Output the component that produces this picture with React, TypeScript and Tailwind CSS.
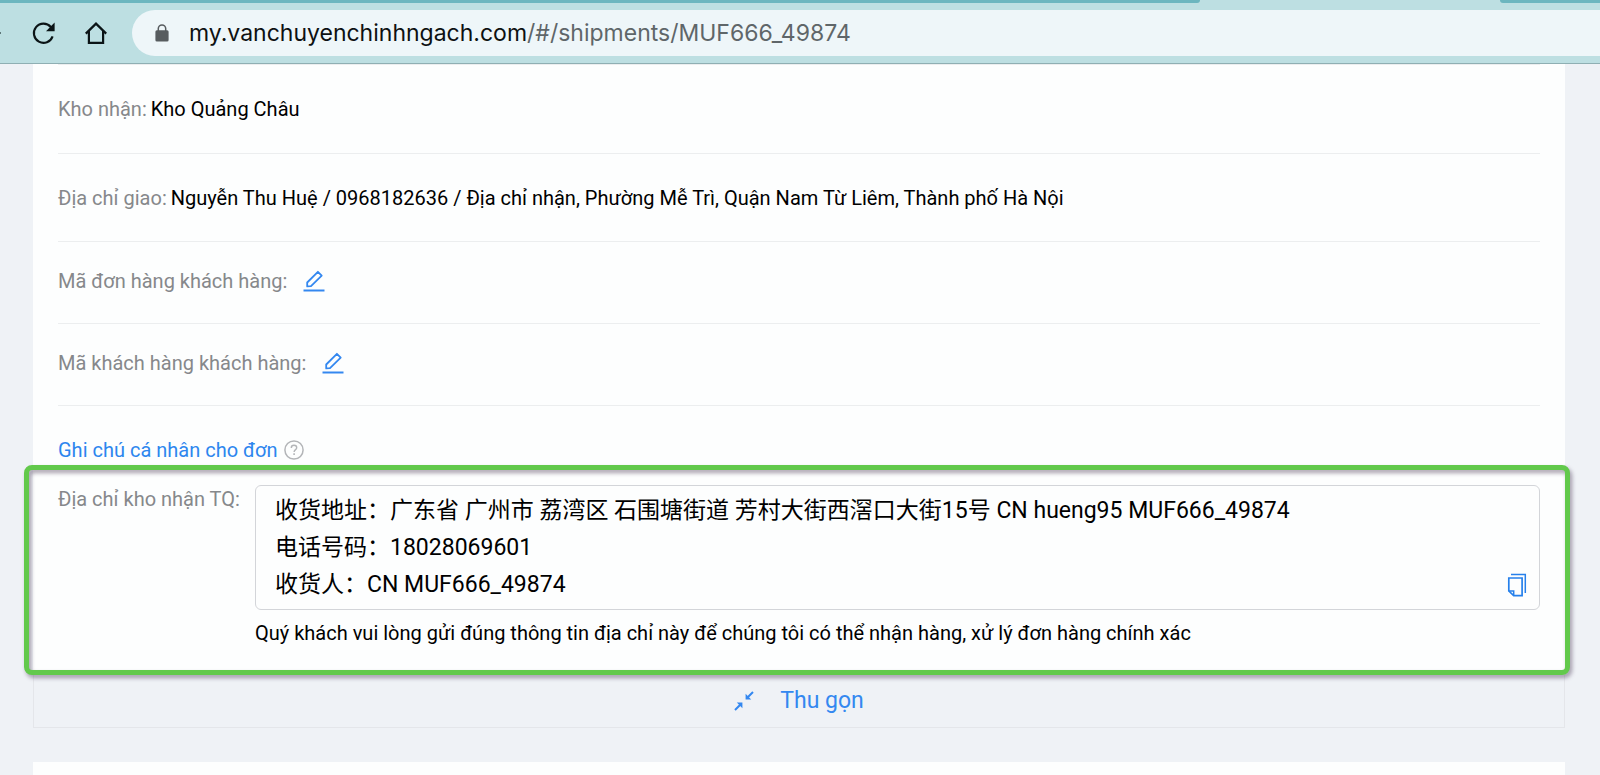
import type { ReactNode } from "react";

const addressLines = [
  "收货地址：广东省 广州市 荔湾区 石围塘街道 芳村大街西滘口大街15号 CN hueng95 MUF666_49874",
  "电话号码：18028069601",
  "收货人：CN MUF666_49874",
];

const ReloadIcon = () => (
  <svg width="24" height="24" viewBox="0 0 24 24" fill="none" aria-hidden="true">
    <path d="M20.6 15.3A9.6 9.6 0 1 1 18.8 6" stroke="#0b1416" strokeWidth="2.1" />
    <path d="M22.6 1.6v8.6H14z" fill="#0b1416" />
  </svg>
);

const HomeIcon = () => (
  <svg width="24" height="24" viewBox="0 0 24 24" fill="none" stroke="#0b1416" strokeWidth="2.2" aria-hidden="true">
    <path d="M1.8 12.6 12 2.6l10.2 10" />
    <path d="M4.9 10v11.8h14.2V10" />
  </svg>
);

const LockIcon = () => (
  <svg width="14" height="18" viewBox="0 0 14 18" fill="none" aria-hidden="true">
    <rect x="0.4" y="6.2" width="13.2" height="11.3" rx="1.5" fill="#575c5f" />
    <path d="M3.3 7V4.6a3.7 3.7 0 0 1 7.4 0V7" stroke="#575c5f" strokeWidth="1.5" />
  </svg>
);

const EditIcon = () => (
  <svg width="22" height="22" viewBox="0 0 22 22" fill="none" stroke="#3488f0" aria-hidden="true">
    <path d="M4.2 16.4v-3.9L14.9 1.8l3.8 3.8L8 16.2z" strokeWidth="1.8" strokeLinejoin="round" />
    <path d="M0.5 20.5h21" strokeWidth="2" />
  </svg>
);

const HelpIcon = () => (
  <svg width="20" height="20" viewBox="0 0 20 20" fill="none" stroke="#b3b5b8" aria-hidden="true">
    <circle cx="10" cy="10" r="9.1" strokeWidth="1.5" />
    <path d="M7.3 7.9c0-1.6 1.2-2.6 2.7-2.6s2.7 1 2.7 2.4c0 1.9-2.6 2-2.6 4.3" strokeWidth="1.4" />
    <path d="M10.1 13.3v1.7" strokeWidth="1.6" />
  </svg>
);

const CopyIcon = () => (
  <svg width="20" height="24" viewBox="0 0 20 24" fill="none" stroke="#2680eb" aria-hidden="true">
    <path d="M4 1.6h14.3V20" strokeWidth="1.5" />
    <path d="M1.8 5h13.3v17.6H6.7L1.8 18z" strokeWidth="1.7" />
    <path d="M1.8 17.9h4.9v4.7" strokeWidth="1.5" />
  </svg>
);

const CollapseIcon = () => (
  <svg width="20" height="20" viewBox="0 0 20 20" fill="none" aria-hidden="true">
    <path d="M19 1l-5 5M1 19l5-5" stroke="#3488f0" strokeWidth="2" />
    <path d="M11.6 2.8v5.6h5.6zM8.4 17.2v-5.6H2.8z" fill="#3488f0" />
  </svg>
);

const Label = ({ children }: { children: ReactNode }) => <span className="text-[#86888b]">{children}</span>;

const App = () => {
  return (
    <div className="h-screen overflow-hidden bg-[#eff2f6] text-[20px] leading-7 text-black font-[Roboto,'Noto_Sans_CJK_SC',sans-serif]">
      <header className="border-b border-[#8fafb3] bg-[#bddfe2]">
        <div className="flex h-[3px] justify-between">
          <div className="w-3/4 rounded-br-lg bg-[#6cb6bf]" />
          <div className="w-[100px] rounded-bl-lg bg-[#6cb6bf]" />
        </div>
        <div className="flex items-center pt-[7px] pb-[7px]">
          <div className="h-[2px] w-px bg-[#5e7779]" />
          <button type="button" aria-label="Reload" className="ml-[31px]">
            <ReloadIcon />
          </button>
          <button type="button" aria-label="Home" className="ml-7">
            <HomeIcon />
          </button>
          <a
            href="#/shipments/MUF666_49874"
            className="ml-6 flex h-[46px] flex-1 items-center gap-5 rounded-l-full bg-[#eef6f9] pl-[23px] text-[23px] text-[#0d1112] font-[Inter,sans-serif]"
          >
            <LockIcon />
            <span>
              my.vanchuyenchinhngach.com<span className="text-[#5f6669]">/#/shipments/MUF666_49874</span>
            </span>
          </a>
        </div>
      </header>

      <main className="mr-[35px] ml-[33px]">
        <section className="bg-[#fdfefe]">
          <div className="mx-[25px]">
            <div className="flex h-[90px] items-center gap-1 border-y border-[#eceeef]">
              <Label>Kho nhận:</Label>
              <span>Kho Quảng Châu</span>
            </div>
            <div className="flex h-[88px] items-center gap-1 border-b border-[#eceeef]">
              <Label>Địa chỉ giao:</Label>
              <span>Nguyễn Thu Huệ / 0968182636 / Địa chỉ nhận, Phường Mễ Trì, Quận Nam Từ Liêm, Thành phố Hà Nội</span>
            </div>
            <div className="flex h-[82px] items-center gap-4 border-b border-[#eceeef] pb-[3px]">
              <Label>Mã đơn hàng khách hàng:</Label>
              <button type="button" aria-label="Sửa mã đơn hàng">
                <EditIcon />
              </button>
            </div>
            <div className="flex h-[82px] items-center gap-4 border-b border-[#eceeef] pb-[3px]">
              <Label>Mã khách hàng khách hàng:</Label>
              <button type="button" aria-label="Sửa mã khách hàng">
                <EditIcon />
              </button>
            </div>
            <div className="flex items-center gap-[7px] pt-[30px]">
              <a href="#note" className="text-[#2d86ee]">
                Ghi chú cá nhân cho đơn
              </a>
              <HelpIcon />
            </div>
          </div>

          <div className="relative mt-1 flex px-[25px] pt-[17px] pb-7">
            {/* highlight frame */}
            <div className="pointer-events-none absolute -top-[3px] -right-[5px] bottom-0 -left-[9px] rounded-lg border-5 border-[#62c94b] drop-shadow-[2px_3px_2px_rgba(60,40,70,0.45)]" />
            <div className="w-[197px] shrink-0">
              <Label>Địa chỉ kho nhận TQ:</Label>
            </div>
            <div className="flex-1">
              <div className="flex items-end justify-between rounded-md border border-[#d3d5d9] py-[6px] pr-3 pl-[19px] text-[23px] leading-[37px]">
                <div>
                  {addressLines.map((line) => (
                    <p key={line}>{line}</p>
                  ))}
                </div>
                <button type="button" aria-label="Sao chép" className="mb-[6px]">
                  <CopyIcon />
                </button>
              </div>
              <p className="mt-[9px]">
                Quý khách vui lòng gửi đúng thông tin địa chỉ này để chúng tôi có thể nhận hàng, xử lý đơn hàng chính xác
              </p>
            </div>
          </div>
        </section>

        <button
          type="button"
          className="flex h-[53px] w-full items-center justify-center gap-[26px] border border-t-0 border-[#e4e6ea] text-[23px] text-[#3488f0]"
        >
          <CollapseIcon />
          Thu gọn
        </button>

        <section className="mt-[34px] h-10 bg-[#fdfefe]" />
      </main>
    </div>
  );
};

export default App;
